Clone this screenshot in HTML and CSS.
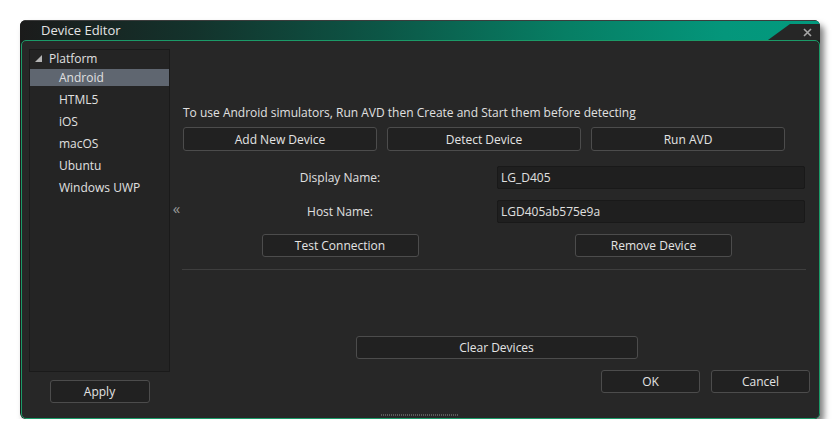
FILE: index.html
```html
<!DOCTYPE html>
<html>
<head>
<meta charset="utf-8">
<link rel="stylesheet" href="styles.css">
</head>
<body>
<div class="window">
  <div class="titlebar">
    <span class="title">Device Editor</span>
    <div class="notch">
      <svg class="close" width="9" height="9" viewBox="0 0 9 9"><path d="M1 1L8 8M8 1L1 8" stroke="#a6a6a6" stroke-width="1.6" fill="none"/></svg>
    </div>
  </div>
  <div class="body">
    <div class="content">
      <div class="left">
        <div class="tree">
          <div class="tree-root">
            <svg class="tri" width="7" height="7" viewBox="0 0 7 7"><polygon points="7,0 7,7 0,7" fill="#b4b4b4"/></svg>
            <span>Platform</span>
          </div>
          <div class="tree-item selected">Android</div>
          <div class="tree-item">HTML5</div>
          <div class="tree-item">iOS</div>
          <div class="tree-item">macOS</div>
          <div class="tree-item">Ubuntu</div>
          <div class="tree-item">Windows UWP</div>
        </div>
        <div class="apply-row"><button class="btn apply">Apply</button></div>
      </div>
      <div class="splitter">&laquo;</div>
      <div class="main">
        <div class="info">To use Android simulators, Run AVD then Create and Start them before detecting</div>
        <div class="btn-row">
          <button class="btn wide">Add New Device</button>
          <button class="btn wide">Detect Device</button>
          <button class="btn wide">Run AVD</button>
        </div>
        <div class="form">
          <div class="label">Display Name:</div>
          <div class="input">LG_D405</div>
          <div class="label">Host Name:</div>
          <div class="input">LGD405ab575e9a</div>
        </div>
        <div class="btn-pair">
          <div class="cell"><button class="btn mid">Test Connection</button></div>
          <div class="cell"><button class="btn mid">Remove Device</button></div>
        </div>
        <div class="divider"></div>
        <div class="spacer"></div>
        <div class="clear-row"><button class="btn clear">Clear Devices</button></div>
        <div class="ok-row">
          <button class="btn small">OK</button>
          <button class="btn small">Cancel</button>
        </div>
      </div>
    </div>
    <div class="grip-row"><div class="grip"></div></div>
  </div>
</div>
</body>
</html>
```
FILE: styles.css
```css
html, body {
  margin: 0;
  padding: 0;
  background: #ffffff;
}
body {
  font-family: "Open Sans", "Noto Sans", sans-serif;
  font-size: 12px;
  color: #e0e0e0;
}
.window {
  margin: 20px 0 0 20px;
  width: 800px;
  height: 399px;
  background: #1c1c1c;
  border-radius: 6px;
  box-shadow: 4px 5px 6px rgba(0, 0, 0, 0.5);
  display: flex;
  flex-direction: column;
  overflow: hidden;
}
.titlebar {
  height: 19px;
  flex: none;
  display: flex;
  align-items: flex-end;
  background: linear-gradient(to right, #1b1b1b 0%, #13332c 22%, #0c5646 45%, #077e64 68%, #04967b 88%, #029a7e 100%);
  border-top: 1px solid #3c3c3c;
}
.title {
  font-size: 13px;
  line-height: 19px;
  padding-left: 21px;
  color: #e4e4e4;
}
.notch {
  margin-left: auto;
  width: 52px;
  height: 16px;
  background: #262626;
  clip-path: polygon(0 100%, 22px 0, 100% 0, 100% 100%);
  display: flex;
  align-items: center;
  justify-content: flex-end;
}
.close {
  margin-right: 8px;
  margin-top: 1px;
}
.body {
  flex: 1;
  margin: 0 0 0 1px;
  width: 797px;
  background: #272727;
  border: 1px solid #1b9a68;
  border-radius: 5px;
  display: flex;
  flex-direction: column;
}
.content {
  flex: 1;
  display: flex;
}
.left {
  width: 141px;
  padding: 8px 0 0 7px;
  display: flex;
  flex-direction: column;
}
.tree {
  height: 321px;
  background: #242424;
  border: 1px solid #1a1a1a;
}
.tree-root {
  height: 17px;
  margin-bottom: 2px;
  display: flex;
  align-items: center;
  padding-left: 5px;
}
.tri {
  margin-right: 7px;
}
.tree-item {
  height: 17px;
  line-height: 17px;
  margin-bottom: 5px;
  padding-left: 29px;
}
.tree-item.selected {
  background: #5f6670;
}
.apply-row {
  display: flex;
  justify-content: center;
  margin-top: 8px;
}
.btn {
  font-family: "Open Sans", "Noto Sans", sans-serif;
  font-size: 12px;
  color: #e4e4e4;
  background: #212121;
  border: 1px solid #4c4c4c;
  border-radius: 3px;
  height: 24px;
  padding: 0;
  box-sizing: border-box;
}
.apply {
  width: 100px;
  height: 23px;
}
.splitter {
  width: 13px;
  display: flex;
  align-items: center;
  justify-content: center;
  color: #9a9a9a;
  font-size: 15px;
  padding-bottom: 40px;
  box-sizing: border-box;
}
.main {
  flex: 1;
  padding: 63px 9px 0 0;
  display: flex;
  flex-direction: column;
}
.info {
  line-height: 17px;
  height: 17px;
}
.btn-row {
  display: flex;
  gap: 10px;
  margin-top: 6px;
}
.wide {
  width: 194px;
}
.form {
  display: grid;
  grid-template-columns: 314px 308px;
  row-gap: 11px;
  margin-top: 15px;
}
.label {
  text-align: center;
  line-height: 23px;
  font-size: 12px;
}
.input {
  height: 23px;
  line-height: 21px;
  box-sizing: border-box;
  background: #1f1f1f;
  border: 1px solid #191919;
  border-radius: 2px;
  padding-left: 3px;
}
.btn-pair {
  display: grid;
  grid-template-columns: 314px 1fr;
  margin-top: 11px;
}
.cell {
  display: flex;
  justify-content: center;
}
.mid {
  width: 157px;
  height: 23px;
}
.divider {
  height: 1px;
  background: #3e3e3e;
  margin: 12px 4px 0 -1px;
}
.spacer {
  height: 66px;
}
.clear-row {
  display: flex;
  justify-content: center;
}
.clear {
  width: 282px;
  height: 23px;
}
.ok-row {
  display: flex;
  justify-content: flex-end;
  gap: 11px;
  margin-top: 11px;
}
.small {
  width: 99px;
  height: 23px;
}
.grip-row {
  height: 4px;
  display: flex;
  justify-content: flex-start;
  padding-left: 359px;
}
.grip {
  width: 78px;
  height: 2px;
  background: repeating-linear-gradient(to right, #5a5a5a 0 1px, transparent 1px 2px);
}
```
